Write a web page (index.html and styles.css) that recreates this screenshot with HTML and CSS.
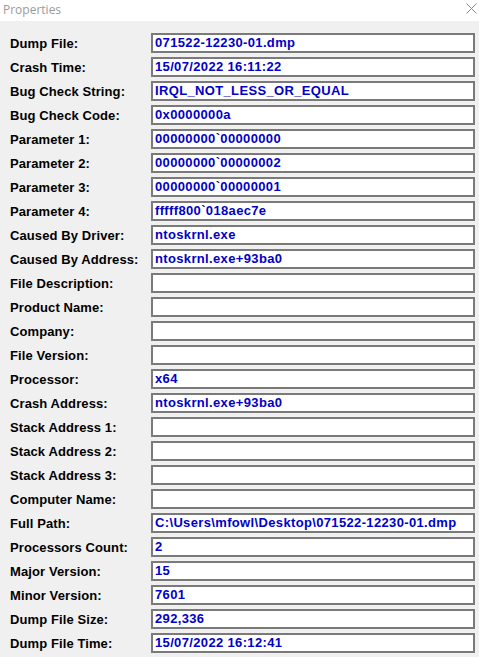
FILE: index.html
```html
<!DOCTYPE html>
<html>
<head>
<meta charset="utf-8">
<link rel="stylesheet" href="styles.css">
</head>
<body>
<div class="titlebar">
  <span class="title">Properties</span>
  <svg class="close" width="11" height="11" viewBox="0 0 11 11"><path d="M0.5 0.5L10.5 10.5M10.5 0.5L0.5 10.5" stroke="#8a8a8a" stroke-width="1" fill="none"/></svg>
</div>
<div class="props">
  <div class="row"><span class="label">Dump File:</span><div class="box">071522-12230-01.dmp</div></div>
  <div class="row"><span class="label">Crash Time:</span><div class="box">15/07/2022 16:11:22</div></div>
  <div class="row"><span class="label">Bug Check String:</span><div class="box">IRQL_NOT_LESS_OR_EQUAL</div></div>
  <div class="row"><span class="label">Bug Check Code:</span><div class="box">0x0000000a</div></div>
  <div class="row"><span class="label">Parameter 1:</span><div class="box">00000000`00000000</div></div>
  <div class="row"><span class="label">Parameter 2:</span><div class="box">00000000`00000002</div></div>
  <div class="row"><span class="label">Parameter 3:</span><div class="box">00000000`00000001</div></div>
  <div class="row"><span class="label">Parameter 4:</span><div class="box">fffff800`018aec7e</div></div>
  <div class="row"><span class="label">Caused By Driver:</span><div class="box">ntoskrnl.exe</div></div>
  <div class="row"><span class="label">Caused By Address:</span><div class="box">ntoskrnl.exe+93ba0</div></div>
  <div class="row"><span class="label">File Description:</span><div class="box"></div></div>
  <div class="row"><span class="label">Product Name:</span><div class="box"></div></div>
  <div class="row"><span class="label">Company:</span><div class="box"></div></div>
  <div class="row"><span class="label">File Version:</span><div class="box"></div></div>
  <div class="row"><span class="label">Processor:</span><div class="box">x64</div></div>
  <div class="row"><span class="label">Crash Address:</span><div class="box">ntoskrnl.exe+93ba0</div></div>
  <div class="row"><span class="label">Stack Address 1:</span><div class="box"></div></div>
  <div class="row"><span class="label">Stack Address 2:</span><div class="box"></div></div>
  <div class="row"><span class="label">Stack Address 3:</span><div class="box"></div></div>
  <div class="row"><span class="label">Computer Name:</span><div class="box"></div></div>
  <div class="row"><span class="label">Full Path:</span><div class="box">C:\Users\mfowl\Desktop\071522-12230-01.dmp</div></div>
  <div class="row"><span class="label">Processors Count:</span><div class="box">2</div></div>
  <div class="row"><span class="label">Major Version:</span><div class="box">15</div></div>
  <div class="row"><span class="label">Minor Version:</span><div class="box">7601</div></div>
  <div class="row"><span class="label">Dump File Size:</span><div class="box">292,336</div></div>
  <div class="row"><span class="label">Dump File Time:</span><div class="box">15/07/2022 16:12:41</div></div>
</div>
</body>
</html>
```
FILE: styles.css
```css
html, body {
  margin: 0;
  padding: 0;
  background: #f0f0f0;
  width: 479px;
  height: 657px;
  overflow: hidden;
}
.titlebar {
  height: 21px;
  background: #ffffff;
  display: flex;
  align-items: center;
  justify-content: space-between;
  padding: 0 2px 0 3px;
  box-sizing: border-box;
}
.title {
  font-family: "Open Sans", "Noto Sans", sans-serif;
  font-size: 12px;
  color: #9a9a9a;
  margin-top: -3px;
}
.close {
  margin-top: -5px;
  margin-right: 0;
}
.props {
  display: flex;
  flex-direction: column;
  gap: 4px;
  padding: 12px 0 0 10px;
}
.row {
  display: flex;
  align-items: center;
  height: 20px;
}
.label {
  width: 141px;
  font-family: "Liberation Sans", Arial, sans-serif;
  font-weight: bold;
  font-size: 13px;
  letter-spacing: 0.1px;
  color: #000;
}
.box {
  width: 324px;
  height: 20px;
  box-sizing: border-box;
  border: 2px solid #7a7a7a;
  background: #fff;
  font-family: "Liberation Sans", Arial, sans-serif;
  font-weight: bold;
  font-size: 13px;
  letter-spacing: 0.35px;
  color: #0000c8;
  padding: 0 0 0 2px;
  line-height: 16px;
  white-space: nowrap;
}
```
